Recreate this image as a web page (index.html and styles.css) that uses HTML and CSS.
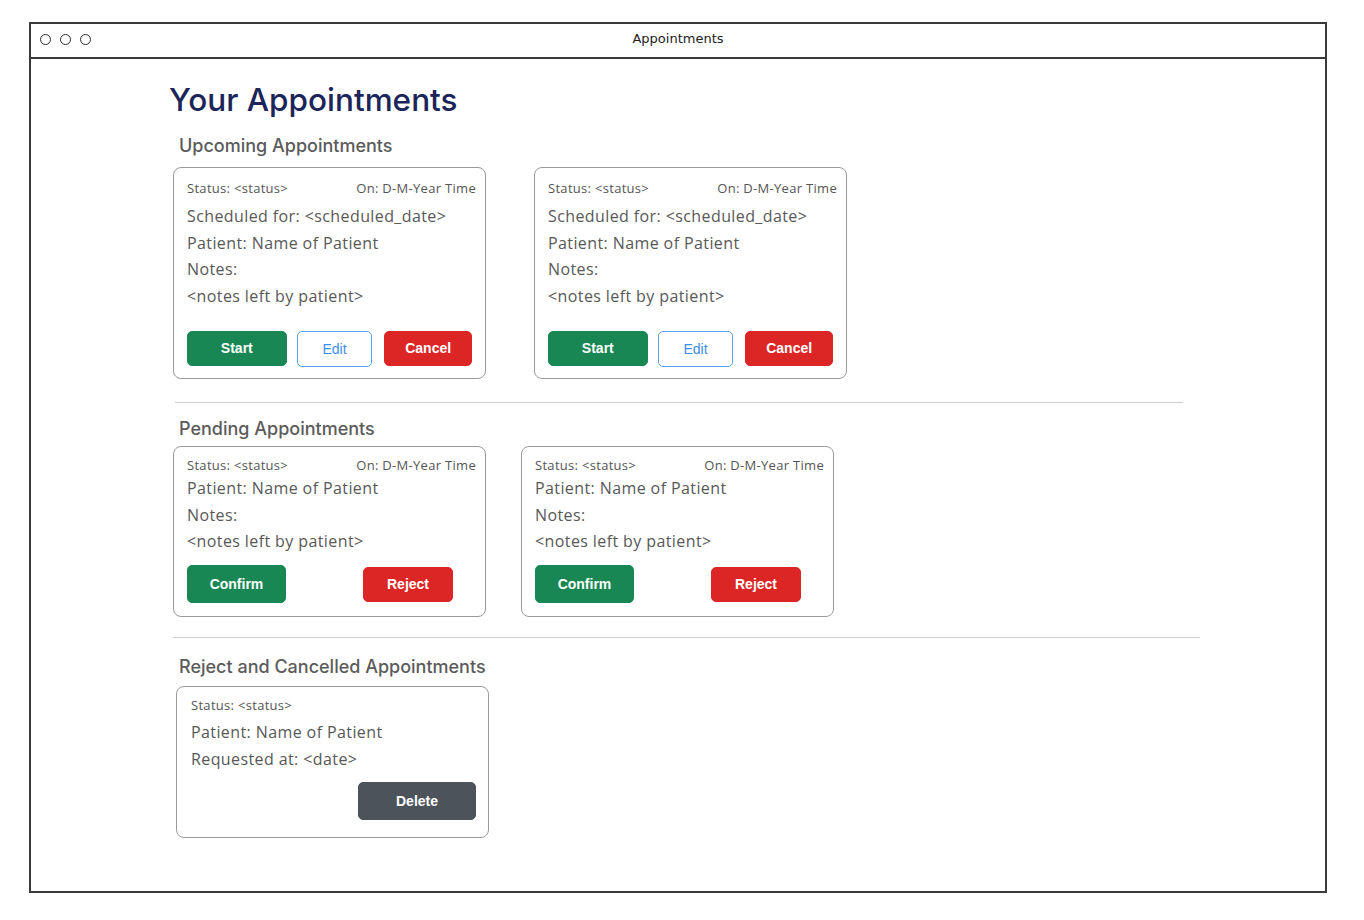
FILE: index.html
```html
<!DOCTYPE html>
<html lang="en">
<head>
<meta charset="utf-8">
<title>Appointments</title>
<link rel="stylesheet" href="styles.css">
</head>
<body>
<div class="window">
  <div class="titlebar">
    <div class="dots"><span class="dot"></span><span class="dot"></span><span class="dot"></span></div>
    <div class="wintitle">Appointments</div>
  </div>
  <main class="content">
    <h1 class="page-title">Your Appointments</h1>

    <section class="section upcoming">
      <h2 class="section-title">Upcoming Appointments</h2>
      <div class="card-row gap-up">
        <div class="card card-up">
          <div class="card-head"><span>Status: &lt;status&gt;</span><span>On: D-M-Year Time</span></div>
          <p class="line first-up">Scheduled for: &lt;scheduled_date&gt;</p>
          <p class="line">Patient: Name of Patient</p>
          <p class="line">Notes:</p>
          <p class="line">&lt;notes left by patient&gt;</p>
          <div class="btns btns-up">
            <button class="btn btn-green btn-start">Start</button>
            <button class="btn btn-outline btn-edit">Edit</button>
            <button class="btn btn-red btn-cancel">Cancel</button>
          </div>
        </div>
        <div class="card card-up">
          <div class="card-head"><span>Status: &lt;status&gt;</span><span>On: D-M-Year Time</span></div>
          <p class="line first-up">Scheduled for: &lt;scheduled_date&gt;</p>
          <p class="line">Patient: Name of Patient</p>
          <p class="line">Notes:</p>
          <p class="line">&lt;notes left by patient&gt;</p>
          <div class="btns btns-up">
            <button class="btn btn-green btn-start">Start</button>
            <button class="btn btn-outline btn-edit">Edit</button>
            <button class="btn btn-red btn-cancel">Cancel</button>
          </div>
        </div>
      </div>
    </section>

    <hr class="divider divider-1">

    <section class="section pending">
      <h2 class="section-title">Pending Appointments</h2>
      <div class="card-row gap-pend">
        <div class="card card-pend">
          <div class="card-head"><span>Status: &lt;status&gt;</span><span>On: D-M-Year Time</span></div>
          <p class="line first-pend">Patient: Name of Patient</p>
          <p class="line">Notes:</p>
          <p class="line">&lt;notes left by patient&gt;</p>
          <div class="btns btns-pend">
            <button class="btn btn-green btn-confirm">Confirm</button>
            <button class="btn btn-red btn-reject">Reject</button>
          </div>
        </div>
        <div class="card card-pend">
          <div class="card-head"><span>Status: &lt;status&gt;</span><span>On: D-M-Year Time</span></div>
          <p class="line first-pend">Patient: Name of Patient</p>
          <p class="line">Notes:</p>
          <p class="line">&lt;notes left by patient&gt;</p>
          <div class="btns btns-pend">
            <button class="btn btn-green btn-confirm">Confirm</button>
            <button class="btn btn-red btn-reject">Reject</button>
          </div>
        </div>
      </div>
    </section>

    <hr class="divider divider-2">

    <section class="section rejected">
      <h2 class="section-title">Reject and Cancelled Appointments</h2>
      <div class="card-row">
        <div class="card card-rej">
          <div class="card-head"><span>Status: &lt;status&gt;</span></div>
          <p class="line first-rej">Patient: Name of Patient</p>
          <p class="line">Requested at: &lt;date&gt;</p>
          <div class="btns btns-rej">
            <button class="btn btn-dark btn-delete">Delete</button>
          </div>
        </div>
      </div>
    </section>
  </main>
</div>
</body>
</html>
```

FILE: styles.css
```css
* { box-sizing: border-box; }

html, body {
  margin: 0;
  padding: 0;
  background: #ffffff;
}

body {
  padding: 22px 0 0 29px;
  font-family: "Open Sans", "Noto Sans", sans-serif;
}

.window {
  width: 1298px;
  height: 871px;
  border: 2px solid #3a3a3a;
  background: #fff;
}

.titlebar {
  height: 35px;
  border-bottom: 2px solid #3a3a3a;
  display: flex;
  align-items: center;
  position: relative;
  padding-bottom: 3px;
}

.dots {
  display: flex;
  gap: 9px;
  padding-left: 9px;
}

.dot {
  width: 11px;
  height: 11px;
  border: 1.6px solid #2a2a2a;
  border-radius: 50%;
}

.wintitle {
  position: absolute;
  left: 0;
  right: 0;
  top: 7px;
  text-align: center;
  font-family: "DejaVu Sans", sans-serif;
  font-size: 13px;
  color: #222;
  pointer-events: none;
}

.content {
  padding: 21px 0 0 138px;
}

.page-title {
  margin: 0;
  font-family: "Inter", "Noto Sans", sans-serif;
  font-weight: 500;
  font-size: 31.5px;
  line-height: 40px;
  color: #1b2559;
}

.section-title {
  margin: 14px 0 0 10px;
  font-family: "Inter", "Noto Sans", sans-serif;
  font-weight: 500;
  font-size: 18px;
  line-height: 24px;
  color: #5b5b5b;
}

.rejected .section-title { margin-top: 17px; }

.card-row {
  display: flex;
  padding-left: 4px;
}

.gap-up { gap: 48px; margin-top: 9px; }
.gap-pend { gap: 35px; margin-top: 5px; }
.rejected .card-row { margin-top: 7px; padding-left: 7px; }

.card {
  width: 313px;
  border: 1px solid #9a9a9a;
  border-radius: 8px;
  color: #555;
  background: #fff;
}

.card-up { height: 212px; padding: 11px 9px 0 13px; }
.card-pend { height: 171px; padding: 9px 9px 0 13px; }
.card-rej { height: 152px; padding: 9px 12px 0 14px; }

.card-head {
  display: flex;
  justify-content: space-between;
  font-size: 13px;
  line-height: 18px;
  font-weight: 400;
  letter-spacing: 0.3px;
}

.line {
  margin: 0;
  font-size: 16px;
  line-height: 26.7px;
  font-weight: 400;
  letter-spacing: 0.4px;
  color: #585858;
}

.first-up { margin-top: 6px; }
.first-pend { margin-top: 1px; }
.first-rej { margin-top: 5px; }

.btns { display: flex; }
.btns-up { margin-top: 21px; gap: 10px; padding-right: 4px; }
.btns-pend { margin-top: 10px; justify-content: space-between; align-items: center; padding-right: 23px; }
.btns-rej { margin-top: 10px; justify-content: flex-end; }

.btn {
  font-family: "Liberation Sans", Arial, sans-serif;
  font-size: 14px;
  font-weight: 700;
  border-radius: 5px;
  border: 1px solid transparent;
  color: #fff;
  padding: 0;
  cursor: pointer;
}

.btn-green { background: #198754; border-color: #198754; }
.btn-red { background: #dc2626; border-color: #dc2626; }
.btn-dark { background: #4c535b; border-color: #4c535b; }
.btn-outline { background: #fff; border-color: #56a3f5; color: #3c8ff0; font-weight: 400; }

.btn-start { width: 100px; height: 35px; }
.btn-edit { width: 76px; height: 36px; }
.btn-cancel { width: 88px; height: 35px; margin-left: 2px; }
.btn-confirm { width: 99px; height: 38px; }
.btn-reject { width: 90px; height: 35px; }
.btn-delete { width: 118px; height: 38px; }

.divider {
  border: 0;
  border-top: 1px solid #cfcfcf;
  margin: 0;
  height: 0;
}

.divider-1 { width: 1008px; margin: 23px 0 0 6px; }
.divider-2 { width: 1027px; margin: 20px 0 0 4px; }
```
